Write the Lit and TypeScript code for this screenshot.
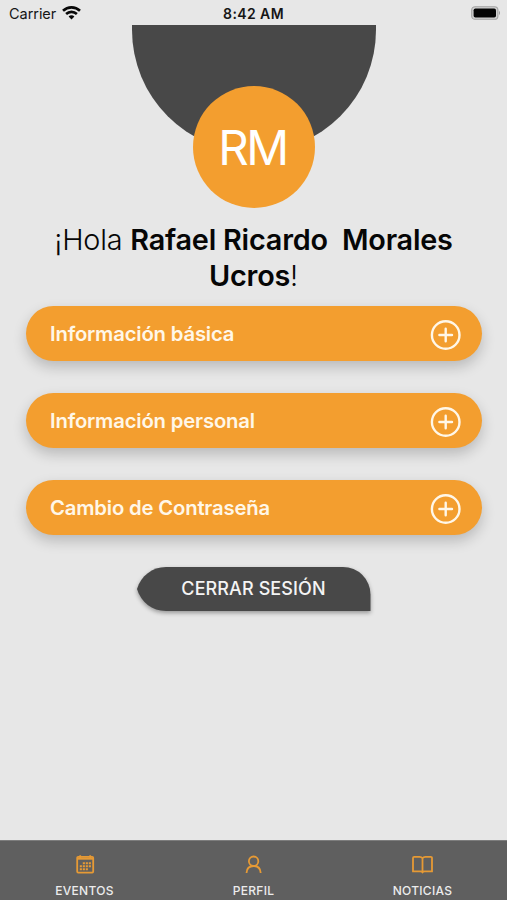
import { LitElement, html, css, svg } from "lit";
import { customElement, property } from "lit/decorators.js";

@customElement("status-bar")
class StatusBar extends LitElement {
  static styles = css`
    :host { display: grid; grid-template-columns: 1fr auto 1fr; align-items: center; height: 25px; padding: 1px 6px 0 9px; box-sizing: border-box; color: #161616; font-size: 14.5px; line-height: 25px; }
    .carrier { display: flex; align-items: center; gap: 6px; letter-spacing: -0.05px; }
    .clock { margin-left: -3px; font-weight: 600; font-size: 14px; letter-spacing: 0.4px; }
    .battery { display: flex; justify-content: flex-end; }
    svg { display: block; margin-top: -2px; }
  `;
  render() {
    return html`
      <span class="carrier"><span>Carrier</span>
        <svg width="19" height="14" viewBox="0 0 19 14" fill="none" stroke="#080808" stroke-width="2.6">
          <path d="M1 4.8C5.8 .2 13.2 .2 18 4.8" />
          <path d="M4.1 8C7.2 5.1 11.8 5.1 14.9 8" />
          <path d="M9.5 13.4L6.6 10.4C8.2 8.9 10.8 8.9 12.4 10.4Z" fill="#080808" stroke="none" />
        </svg>
      </span>
      <span class="clock">8:42 AM</span>
      <span class="battery">
        <svg width="30" height="14" viewBox="0 0 30 14">
          <rect x=".7" y=".7" width="26.2" height="12.6" rx="3.4" fill="#d2d2d2" stroke="#a3a3a3" stroke-width="1.1" />
          <rect x="2.6" y="2.5" width="22.4" height="9" rx="1.8" fill="#050505" />
          <path d="M28 4.8Q30 7 28 9.2Z" fill="#9b9b9b" />
        </svg>
      </span>
    `;
  }
}

@customElement("accordion-card")
class AccordionCard extends LitElement {
  @property() label = "";
  static styles = css`
    :host { display: flex; align-items: center; justify-content: space-between; height: 55px; box-sizing: border-box; padding: 0 21px 0 24.5px; border-radius: 27.5px; background: #f39e2f; color: #fff7e8; box-shadow: 0 6px 14px rgba(0, 0, 0, 0.2); }
    .label { font-size: 20.3px; font-weight: 600; line-height: 24px; white-space: nowrap; letter-spacing: -0.18px; }
    svg { display: block; margin-top: 2px; }
  `;
  render() {
    return html`
      <span class="label">${this.label}</span>
      <svg width="31" height="31" viewBox="0 0 31 31" fill="none" stroke="#fff7e8" stroke-width="2.4" stroke-linecap="round">
        <circle cx="15.7" cy="16" r="13.8" />
        <path d="M15.7 9.7V22.3M9.4 16H22" />
      </svg>
    `;
  }
}

const calendar = svg`
  <rect x="2.2" y="2.8" width="16" height="15.8" rx="1" />
  <path d="M2.2 4.6H18.2" stroke-width="2.2" />
  <path d="M5.2 1.2V4M15.2 1.2V4" />
  <path d="M7.8 9.2H16M4.8 12.2H16M4.8 15.2H13" stroke-width="2" stroke-dasharray="2.1 .9" />`;
const person = svg`
  <circle cx="9.6" cy="7.2" r="4.7" />
  <path d="M2.5 19C2.7 14.7 5.4 12 9.6 12S16.5 14.7 16.7 19" />`;
const book = svg`
  <path d="M9.5 4.2C8.8 3.2 7.9 2.8 6.7 2.8H1.2C.4 2.8 0 3.3 0 4.1V17.4H7.5C8.5 17.4 9.1 17.7 9.5 18.2C9.9 17.7 10.5 17.4 11.5 17.4H19V4.1C19 3.3 18.6 2.8 17.8 2.8H12.3C11.1 2.8 10.2 3.2 9.5 4.2ZM9.5 4.2V18.2" />`;

@customElement("tab-bar")
class TabBar extends LitElement {
  static styles = css`
    :host { display: grid; grid-template-columns: repeat(3, 1fr); height: 60px; background: #5f5f5f; box-shadow: inset 0 1px #7d7d7d; }
    .tab { display: flex; flex-direction: column; align-items: center; padding-top: 14px; gap: 9px; color: #ececec; font-size: 12px; font-weight: 500; line-height: 15px; letter-spacing: 0.3px; }
    svg { display: block; overflow: visible; }
  `;
  render() {
    const tabs = [
      { label: "EVENTOS", icon: calendar },
      { label: "PERFIL", icon: person },
      { label: "NOTICIAS", icon: book },
    ];
    return tabs.map(
      (t) => html`<div class="tab">
        <svg width="20" height="20" viewBox="0 0 20 20" fill="none" stroke="#e69a35" stroke-width="1.8">${t.icon}</svg>
        <span>${t.label}</span>
      </div>`
    );
  }
}

@customElement("app-root")
class AppRoot extends LitElement {
  static styles = css`
    :host { display: flex; flex-direction: column; height: 900px; background: #e7e7e7; font-family: Inter, "Liberation Sans", sans-serif; overflow: hidden; }
    .hero { display: grid; justify-items: center; height: 184px; }
    .bowl { grid-area: 1 / 1; width: 244px; height: 127px; margin-left: 1px; border-radius: 0 0 122px 122px; background: #484848; }
    .avatar { grid-area: 1 / 1; display: grid; place-items: center; width: 122px; height: 122px; margin: 61px 0 0 1px; border-radius: 50%; background: #f39e2f; color: #fff; font-size: 47.5px; font-weight: 375; line-height: 58px; letter-spacing: -2.6px; }
    .initials { margin: 2px 3px 0 0; }
    .greeting { margin: 13px 0 12px; color: #060606; font-size: 28.8px; font-weight: 300; line-height: 36px; text-align: center; letter-spacing: -0.2px; }
    .line { display: block; white-space: pre; }
    .name { font-weight: 600; }
    .cards { display: flex; flex-direction: column; gap: 32px; padding: 0 25px 0 25.5px; }
    .logout { display: grid; place-items: center; width: 234px; height: 45px; margin: 31.5px auto 0; }
    .shape { grid-area: 1 / 1; overflow: visible; filter: drop-shadow(0 2px 2px rgba(0, 0, 0, 0.35)); }
    .text { grid-area: 1 / 1; z-index: 1; color: #f4f4f4; font-size: 18px; font-weight: 540; line-height: 22px; letter-spacing: 0.1px; }
    tab-bar { margin-top: auto; }
  `;
  render() {
    return html`
      <status-bar></status-bar>
      <div class="hero">
        <div class="bowl"></div>
        <div class="avatar"><span class="initials">RM</span></div>
      </div>
      <div class="greeting">
        <span class="line">¡Hola <span class="name">Rafael Ricardo  Morales</span></span>
        <span class="line"><span class="name">Ucros</span>!</span>
      </div>
      <div class="cards">
        <accordion-card label="Información básica"></accordion-card>
        <accordion-card label="Información personal"></accordion-card>
        <accordion-card label="Cambio de Contraseña"></accordion-card>
      </div>
      <div class="logout">
        <svg class="shape" width="234" height="45" viewBox="0 0 234 45">
          <path d="M0 22C4 9 15 0 29 0H206A27.5 27.5 0 0 1 233.5 27.5V44H29C15 44 4 35 0 22Z" fill="#484848" />
        </svg>
        <span class="text">CERRAR SESIÓN</span>
      </div>
      <tab-bar></tab-bar>
    `;
  }
}
